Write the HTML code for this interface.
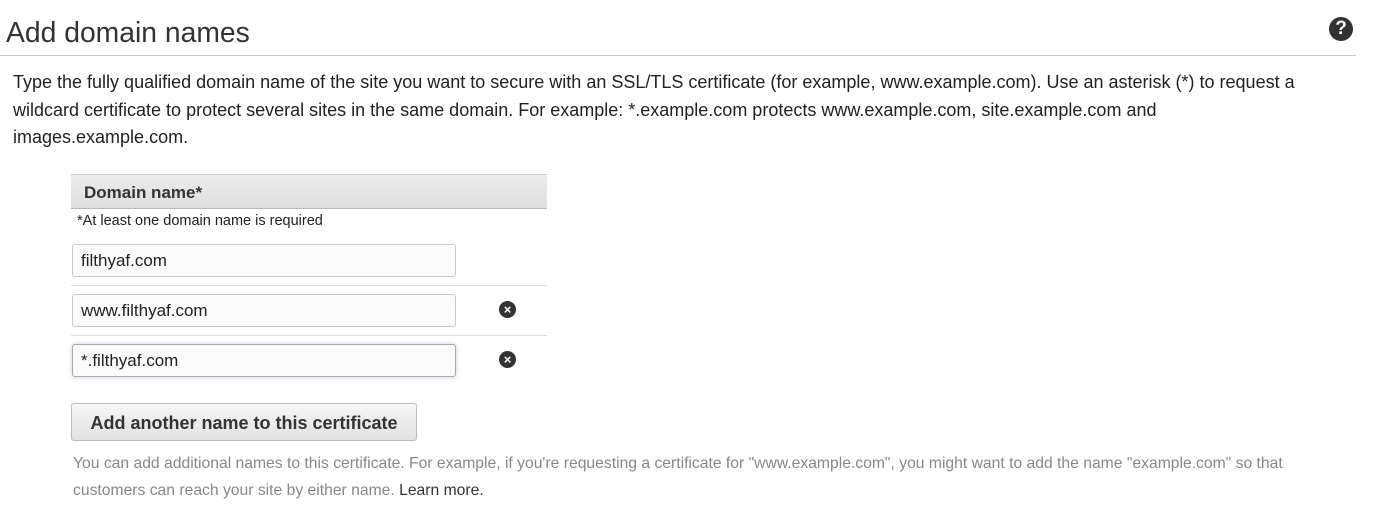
<!DOCTYPE html>
<html><head><style>
body{margin:0;width:1400px;height:523px;background:#fff;font-family:"Liberation Sans",sans-serif;position:relative;overflow:hidden;color:#222}
.a{position:absolute}
h1{position:absolute;left:6px;top:16px;margin:0;font-size:28.3px;font-weight:normal;color:#333}
.hr{left:0;top:55px;width:1356px;height:1px;background:#ccc}
.desc{left:13px;top:69px;width:1310px;font-size:18px;line-height:27.5px;color:#222}
.th{left:71px;top:174px;width:476px;height:33px;background:linear-gradient(#ececec,#dedede);border-top:1px solid #ccc;border-bottom:1px solid #bbb}
.th span{position:absolute;left:13px;top:8px;font-weight:bold;font-size:17px;color:#333}
.inp{position:absolute;left:72px;border:1px solid #c8c8c8;border-radius:3px;background:#fbfbfb;font-size:17px;line-height:31px;padding-left:8px;box-sizing:border-box;width:384px;height:33px}
.sep{left:71px;width:476px;height:1px;background:#ddd}
.x{position:absolute;left:499px;width:17px;height:17px;border-radius:50%;background:#333;color:#fff;font-size:13px;line-height:17px;text-align:center;font-weight:bold}
.btn{left:71px;top:403px;width:346px;height:38px;border:1px solid #bbb;border-radius:3px;background:linear-gradient(#f6f6f6,#e2e2e2);box-sizing:border-box;font-weight:bold;font-size:18px;line-height:38px;text-align:center;color:#333}
.help{left:73px;top:450px;width:1225px;font-size:15.7px;line-height:27px;color:#888}
</style></head><body>
<h1>Add domain names</h1>
<div class="a" style="left:1329px;top:17px;width:24px;height:24px;border-radius:50%;background:#333;color:#fff;font-weight:bold;font-size:19px;line-height:24px;text-align:center">?</div>
<div class="a hr"></div>
<div class="a desc">Type the fully qualified domain name of the site you want to secure with an SSL/TLS certificate (for example, www.example.com). Use an asterisk (*) to request a wildcard certificate to protect several sites in the same domain. For example: *.example.com protects www.example.com, site.example.com and images.example.com.</div>
<div class="a th"><span>Domain name*</span></div>
<div class="a" style="left:77px;top:213px;font-size:14.5px;color:#222">*At least one domain name is required</div>
<div class="inp" style="top:244px">filthyaf.com</div>
<div class="a sep" style="top:285px"></div>
<div class="inp" style="top:294px">www.filthyaf.com</div>
<div class="x" style="top:301px">×</div>
<div class="a sep" style="top:335px"></div>
<div class="inp" style="top:344px;border-color:#aaa;box-shadow:0 0 5px #ccd">*.filthyaf.com</div>
<div class="x" style="top:351px">×</div>
<div class="a btn">Add another name to this certificate</div>
<div class="a help">You can add additional names to this certificate. For example, if you're requesting a certificate for "www.example.com", you might want to add the name "example.com" so that customers can reach your site by either name. <span style="color:#333">Learn more.</span></div>
</body></html>
